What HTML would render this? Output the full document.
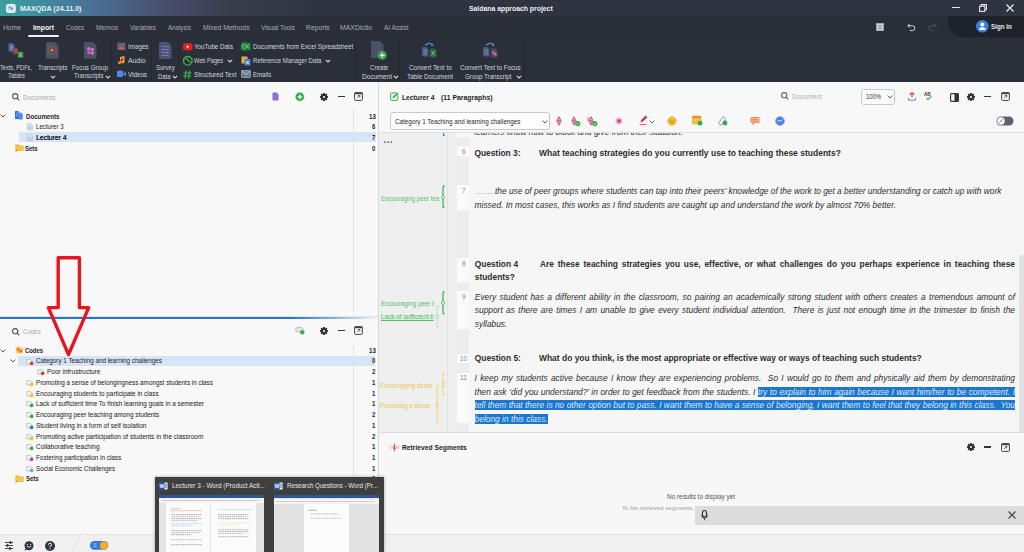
<!DOCTYPE html>
<html><head><meta charset="utf-8">
<style>
*{margin:0;padding:0;box-sizing:border-box}
html,body{width:1024px;height:552px;overflow:hidden;background:#f7f7f7;font-family:"Liberation Sans",sans-serif;position:relative}
.a{position:absolute}
.t{position:absolute;white-space:nowrap;transform-origin:0 50%}
svg{position:absolute;overflow:visible}
</style></head><body>
<div class="a" style="left:0px;top:0px;width:1024px;height:16px;background:linear-gradient(90deg,#3b9fa0 0px,#3f8c9f 40px,#4a6f94 95px,#494f70 160px,#383d4c 230px,#2f3440 320px);"></div>
<svg style="left:6.4px;top:3.9px;" width="10" height="9" viewBox="0 0 10 9"><rect x="0.7" y="0.7" width="8.4" height="7.6" rx="1.5" fill="#d6e0f0" stroke="#f4f7fb" stroke-width="1.3"/><circle cx="3.6" cy="3.6" r="1" fill="#5a80d0"/><circle cx="6" cy="4.8" r="1" fill="#5a80d0"/><path d="M3 6.3L6.5 2.5" stroke="#9aa8c0" stroke-width="0.6"/></svg>
<div class="t" style="left:20px;top:3.91px;font-size:7px;line-height:10px;color:#eef0f3;font-weight:bold;transform:scaleX(1.0176);">MAXQDA (24.11.0)</div>
<div class="t" style="left:468.7px;top:3.39px;font-size:8px;line-height:11px;color:#eef0f3;font-weight:bold;transform:scaleX(0.8557);">Saldana approach project</div>
<div class="a" style="left:951.5px;top:7px;width:8px;height:1.2px;background:#e6e8ec;"></div>
<svg style="left:979px;top:4px;" width="8" height="8" viewBox="0 0 8 8"><rect x="0.6" y="2.2" width="5.2" height="5.2" fill="none" stroke="#e6e8ec" stroke-width="1.1"/><path d="M2.2 2.2V0.6H7.4V5.8H5.8" fill="none" stroke="#e6e8ec" stroke-width="1.1"/></svg>
<svg style="left:1006px;top:4px;" width="8" height="8" viewBox="0 0 8 8"><path d="M0.5 0.5L7.5 7.5M7.5 0.5L0.5 7.5" stroke="#e6e8ec" stroke-width="1.3"/></svg>
<div class="a" style="left:0px;top:16px;width:1024px;height:21px;background:#292e39;"></div>
<div class="t" style="left:3px;top:22.85px;font-size:7.5px;line-height:10px;color:#a9adb5;transform:scaleX(0.8993);">Home</div>
<div class="t" style="left:33px;top:22.85px;font-size:7.5px;line-height:10px;color:#f4f5f7;font-weight:bold;transform:scaleX(0.8996);">Import</div>
<div class="t" style="left:65.6px;top:22.85px;font-size:7.5px;line-height:10px;color:#a9adb5;transform:scaleX(0.8346);">Codes</div>
<div class="t" style="left:96px;top:22.85px;font-size:7.5px;line-height:10px;color:#a9adb5;transform:scaleX(0.8945);">Memos</div>
<div class="t" style="left:130px;top:22.85px;font-size:7.5px;line-height:10px;color:#a9adb5;transform:scaleX(0.8464);">Variables</div>
<div class="t" style="left:168px;top:22.85px;font-size:7.5px;line-height:10px;color:#a9adb5;transform:scaleX(0.8233);">Analysis</div>
<div class="t" style="left:203.2px;top:22.85px;font-size:7.5px;line-height:10px;color:#a9adb5;transform:scaleX(0.9163);">Mixed Methods</div>
<div class="t" style="left:260.5px;top:22.85px;font-size:7.5px;line-height:10px;color:#a9adb5;transform:scaleX(0.8553);">Visual Tools</div>
<div class="t" style="left:305.6px;top:22.85px;font-size:7.5px;line-height:10px;color:#a9adb5;transform:scaleX(0.9023);">Reports</div>
<div class="t" style="left:340px;top:22.85px;font-size:7.5px;line-height:10px;color:#a9adb5;transform:scaleX(0.9196);">MAXDictio</div>
<div class="t" style="left:383.6px;top:22.85px;font-size:7.5px;line-height:10px;color:#a9adb5;transform:scaleX(0.8517);">AI Assist</div>
<div class="a" style="left:28px;top:35px;width:31px;height:2.2px;background:#f2f3f5;border-radius:1px"></div>
<div class="a" style="left:948px;top:16px;width:76px;height:21px;background:#1e222a;border-radius:0 0 0 15px"></div>
<svg style="left:975.5px;top:20.4px;" width="13" height="13" viewBox="0 0 13 13"><circle cx="6.3" cy="6.3" r="6.3" fill="#3a7fe0"/><circle cx="6.3" cy="4.6" r="2" fill="#fff"/><path d="M3 10C3.3 7.8 4.7 7.3 6.3 7.3S9.3 7.8 9.6 10Z" fill="#fff"/></svg>
<div class="t" style="left:990.5px;top:22.31px;font-size:7px;line-height:10px;color:#e8eaee;font-weight:bold;transform:scaleX(0.8910);">Sign in</div>
<svg style="left:875.5px;top:23px;" width="8" height="8" viewBox="0 0 8 8"><rect x="0.5" y="0.5" width="7" height="7" fill="#cfd2d8" stroke="#9ea3ab" stroke-width="1"/><path d="M2 2.5H6M2 4H6M2 5.5H6" stroke="#8a8f98" stroke-width="0.8"/></svg>
<svg style="left:906.5px;top:23px;" width="9" height="8" viewBox="0 0 9 8"><path d="M2.5 1L0.8 2.8L2.5 4.6" fill="none" stroke="#d6d9de" stroke-width="1"/><path d="M1 2.8H5.5A2.4 2.4 0 0 1 5.5 7.6H3" fill="none" stroke="#d6d9de" stroke-width="1"/></svg>
<svg style="left:928px;top:23px;" width="9" height="8" viewBox="0 0 9 8"><path d="M6.5 1L8.2 2.8L6.5 4.6" fill="none" stroke="#50555f" stroke-width="1"/><path d="M8 2.8H3.5A2.4 2.4 0 0 0 3.5 7.6H6" fill="none" stroke="#50555f" stroke-width="1"/></svg>
<div class="a" style="left:0px;top:37px;width:1024px;height:45px;background:#2a2f3a;"></div>
<div class="a" style="left:0px;top:36.8px;width:1024px;height:1px;background:#252932;"></div>
<svg style="left:0px;top:0px;" width="1" height="1" viewBox="0 0 1 1"></svg>
<svg style="left:8px;top:43px" width="17" height="16"><path d="M0.5 1.3Q0.5 0.3 1.5 0.3H4.7L6.5 2.0999999999999996V7.800000000000001Q6.5 8.8 5.5 8.8H1.5Q0.5 8.8 0.5 7.800000000000001Z" fill="#4d6a9a"/><path d="M2 3H5M2 4.5H5M2 6H5" stroke="#7fa0d8" stroke-width="0.8"/><path d="M5 5.5Q5 4.5 6 4.5H8.5L10 6.0V10.5Q10 11.5 9 11.5H6Q5 11.5 5 10.5Z" fill="#6a4a55"/><path d="M6 10L7.5 6L9 10" fill="none" stroke="#d0504a" stroke-width="0.9"/><path d="M9.5 9.5Q9.5 8.5 10.5 8.5H13.7L15.5 10.3V14.0Q15.5 15.0 14.5 15.0H10.5Q9.5 15.0 9.5 14.0Z" fill="#3f5a4a"/><path d="M10.5 10L14.5 13.5M14.5 10L10.5 13.5" stroke="#5fd06a" stroke-width="1.1"/><path d="M10.5 9.8H14.8M10.5 13.8H14.8" stroke="#5fd06a" stroke-width="0.8"/></svg>
<div class="t" style="left:0px;top:63.05px;font-size:7.5px;line-height:10px;color:#d3d6dc;transform:scaleX(0.7527);">Texts, PDFs,</div>
<div class="t" style="left:8px;top:71.25px;font-size:7.5px;line-height:10px;color:#d3d6dc;transform:scaleX(0.7839);">Tables</div>
<svg style="left:46px;top:42px" width="13" height="17"><path d="M0 1Q0 0 1 0H8.75L12.5 3.75V15.8Q12.5 16.8 11.5 16.8H1Q0 16.8 0 15.8Z" fill="#4a5365"/><circle cx="6.2" cy="8.3" r="4" fill="none" stroke="#a5584e" stroke-width="1.3" stroke-dasharray="1 0.8"/><circle cx="6.2" cy="8.3" r="1.8" fill="#d43a3a"/><circle cx="5.6" cy="8" r="0.9" fill="#f2c230"/></svg>
<div class="t" style="left:37.5px;top:63.05px;font-size:7.5px;line-height:10px;color:#d3d6dc;transform:scaleX(0.8014);">Transcripts</div>
<svg style="left:49.5px;top:74.5px;" width="6" height="4" viewBox="0 0 6 4"><path d="M0.8 0.8L3 3L5.2 0.8" fill="none" stroke="#d3d6dc" stroke-width="1.1"/></svg>
<svg style="left:84px;top:42px" width="13" height="17"><path d="M0 1Q0 0 1 0H8.75L12.5 3.75V15.8Q12.5 16.8 11.5 16.8H1Q0 16.8 0 15.8Z" fill="#4a5365"/><circle cx="4.6" cy="6.8" r="1.7" fill="#e06ad0"/><circle cx="8.2" cy="7.4" r="1.7" fill="#e06ad0"/><circle cx="5" cy="10.5" r="1.7" fill="#c85cc0"/><circle cx="8.4" cy="11" r="1.7" fill="#e06ad0"/></svg>
<div class="t" style="left:72px;top:63.05px;font-size:7.5px;line-height:10px;color:#d3d6dc;transform:scaleX(0.8303);">Focus Group</div>
<div class="t" style="left:74.4px;top:71.25px;font-size:7.5px;line-height:10px;color:#d3d6dc;transform:scaleX(0.8014);">Transcripts</div>
<svg style="left:105px;top:74.5px;" width="6" height="4" viewBox="0 0 6 4"><path d="M0.8 0.8L3 3L5.2 0.8" fill="none" stroke="#d3d6dc" stroke-width="1.1"/></svg>
<div class="a" style="left:111px;top:40px;width:1px;height:40px;background:#242830;"></div>
<svg style="left:117px;top:42px" width="9" height="9"><rect x="0.3" y="0.5" width="8" height="7.5" rx="1" fill="#5b5f75"/><path d="M1 7.5L3.5 4L5.5 6L6.8 5L8 7.5Z" fill="#e0504f"/><circle cx="6" cy="2.6" r="0.9" fill="#e0504f"/></svg>
<div class="t" style="left:127.8px;top:42.25px;font-size:7.5px;line-height:10px;color:#d3d6dc;transform:scaleX(0.8330);">Images</div>
<svg style="left:117px;top:56px" width="9" height="9"><path d="M3 8A1.6 1.6 0 1 1 3 5V1L7.5 0V5.5A1.6 1.6 0 1 1 6 4.2V2L4.2 2.4V6.6A1.6 1.6 0 0 1 3 8Z" fill="#f0a02a"/><path d="M1.2 7L6 2" stroke="#d03a2a" stroke-width="1"/></svg>
<div class="t" style="left:127.8px;top:56.15px;font-size:7.5px;line-height:10px;color:#d3d6dc;transform:scaleX(0.9121);">Audio</div>
<svg style="left:117px;top:70px" width="9" height="8"><rect x="0" y="0.8" width="6" height="6.2" rx="0.8" fill="#4f8ae8"/><path d="M6.2 3.3L8.8 1.5V6.3L6.2 4.5Z" fill="#4f8ae8"/></svg>
<div class="t" style="left:127.8px;top:69.85px;font-size:7.5px;line-height:10px;color:#d3d6dc;transform:scaleX(0.8334);">Videos</div>
<div class="a" style="left:151px;top:40px;width:1px;height:40px;background:#242830;"></div>
<svg style="left:159px;top:42px" width="13" height="17"><path d="M0 1Q0 0 1 0H8.75L12.5 3.75V16Q12.5 17 11.5 17H1Q0 17 0 16Z" fill="#4a5370"/><path d="M2.5 4.5H10M2.5 7.5H10M2.5 10.5H10M2.5 13.5H10" stroke="#6e7fc0" stroke-width="1.2"/><circle cx="4" cy="7.5" r="0.9" fill="#d55bd0"/><circle cx="8" cy="10.5" r="0.9" fill="#d55bd0"/></svg>
<div class="t" style="left:155.8px;top:63.25px;font-size:7.5px;line-height:10px;color:#d3d6dc;transform:scaleX(0.8011);">Survey</div>
<div class="t" style="left:157.9px;top:71.55px;font-size:7.5px;line-height:10px;color:#d3d6dc;transform:scaleX(0.7890);">Data</div>
<svg style="left:171.5px;top:74.5px;" width="6" height="4" viewBox="0 0 6 4"><path d="M0.8 0.8L3 3L5.2 0.8" fill="none" stroke="#d3d6dc" stroke-width="1.1"/></svg>
<div class="a" style="left:178px;top:40px;width:1px;height:40px;background:#242830;"></div>
<svg style="left:183px;top:43px" width="10" height="8"><rect x="0" y="0.3" width="9.5" height="7" rx="2" fill="#e52020"/><path d="M3.8 2.2L6.3 3.8L3.8 5.4Z" fill="#fff"/></svg>
<div class="t" style="left:194px;top:42.25px;font-size:7.5px;line-height:10px;color:#d3d6dc;transform:scaleX(0.8227);">YouTube Data</div>
<svg style="left:183px;top:56px" width="10" height="10"><circle cx="4.8" cy="4.8" r="4.3" fill="none" stroke="#3fb64a" stroke-width="1.4"/><path d="M2.5 3.5Q4 2 5 4T7.5 6" fill="none" stroke="#3fb64a" stroke-width="1.3"/></svg>
<div class="t" style="left:194px;top:56.15px;font-size:7.5px;line-height:10px;color:#d3d6dc;transform:scaleX(0.7505);">Web Pages</div>
<svg style="left:226.5px;top:59px;" width="6" height="4" viewBox="0 0 6 4"><path d="M0.8 0.8L3 3L5.2 0.8" fill="none" stroke="#d3d6dc" stroke-width="1.1"/></svg>
<svg style="left:183px;top:70px" width="9" height="9"><path d="M3 0.5L2 8.5M6.5 0.5L5.5 8.5M0.5 3H8.5M0.3 6H8.2" stroke="#3fb64a" stroke-width="1.2"/></svg>
<div class="t" style="left:194px;top:69.85px;font-size:7.5px;line-height:10px;color:#d3d6dc;transform:scaleX(0.8447);">Structured Text</div>
<svg style="left:241px;top:42px" width="10" height="9"><path d="M1 0.5H9.5V8.5H1Z" fill="#1f7a3c"/><path d="M0 2L4 0.5V8.5L0 7Z" fill="#2e9e4f"/><path d="M4.5 2.5L8 6.5M8 2.5L4.5 6.5" stroke="#7ee08e" stroke-width="1"/></svg>
<div class="t" style="left:252.7px;top:42.25px;font-size:7.5px;line-height:10px;color:#d3d6dc;transform:scaleX(0.8354);">Documents from Excel Spreadsheet</div>
<svg style="left:241px;top:56px" width="10" height="10"><rect x="0.5" y="0.5" width="6" height="7" fill="#e3b23a"/><rect x="3.5" y="3" width="6" height="6.5" fill="#4a7fd0"/><rect x="5" y="5" width="3" height="3" fill="#9fc4f0"/></svg>
<div class="t" style="left:252.7px;top:56.15px;font-size:7.5px;line-height:10px;color:#d3d6dc;transform:scaleX(0.8134);">Reference Manager Data</div>
<svg style="left:325px;top:59px;" width="6" height="4" viewBox="0 0 6 4"><path d="M0.8 0.8L3 3L5.2 0.8" fill="none" stroke="#d3d6dc" stroke-width="1.1"/></svg>
<svg style="left:241px;top:70px" width="10" height="8"><rect x="0.5" y="0.5" width="9" height="7" rx="0.8" fill="#6a7a90" stroke="#9aa8ba" stroke-width="0.8"/><path d="M0.8 1L5 4.5L9.2 1" fill="none" stroke="#c9d3df" stroke-width="0.8"/></svg>
<div class="t" style="left:252.7px;top:69.85px;font-size:7.5px;line-height:10px;color:#d3d6dc;transform:scaleX(0.8083);">Emails</div>
<div class="a" style="left:355px;top:40px;width:1px;height:40px;background:#242830;"></div>
<svg style="left:371px;top:41px" width="17" height="20"><path d="M0 1Q0 0 1 0H8.75L12.5 3.75V16Q12.5 17 11.5 17H1Q0 17 0 16Z" fill="#4a5365"/><circle cx="11.3" cy="14.3" r="4" fill="#2fae4a"/><circle cx="11.3" cy="14.3" r="4.4" fill="none" stroke="#8fe09a" stroke-width="0.6" stroke-dasharray="0.8 0.8"/><path d="M9 14.3H13.6M11.3 12V16.6" stroke="#fff" stroke-width="1.2"/></svg>
<div class="t" style="left:369.5px;top:63.05px;font-size:7.5px;line-height:10px;color:#d3d6dc;transform:scaleX(0.8083);">Create</div>
<div class="t" style="left:361.5px;top:71.55px;font-size:7.5px;line-height:10px;color:#d3d6dc;transform:scaleX(0.8775);">Document</div>
<svg style="left:393px;top:74.5px;" width="6" height="4" viewBox="0 0 6 4"><path d="M0.8 0.8L3 3L5.2 0.8" fill="none" stroke="#d3d6dc" stroke-width="1.1"/></svg>
<div class="a" style="left:399px;top:40px;width:1px;height:40px;background:#242830;"></div>
<svg style="left:421px;top:42px" width="18" height="16"><path d="M4 3.5Q8 -0.5 12 3" fill="none" stroke="#4f8ae8" stroke-width="1.2"/><path d="M11 1.2L12.6 3.6L10 4.3" fill="#4f8ae8"/><path d="M1 6Q1 5 2 5H5.55L7.5 6.95V13.5Q7.5 14.5 6.5 14.5H2Q1 14.5 1 13.5Z" fill="#4a5a7a"/><path d="M2.5 8H6M2.5 10H6M2.5 12H6" stroke="#7fa0d8" stroke-width="0.7"/><path d="M9 7.5Q9 6.5 10 6.5H13.55L15.5 8.45V14.5Q15.5 15.5 14.5 15.5H10Q9 15.5 9 14.5Z" fill="#3f5a4a"/><path d="M10.5 9L14 13.5M14 9L10.5 13.5" stroke="#5fd06a" stroke-width="1"/></svg>
<div class="t" style="left:409px;top:63.05px;font-size:7.5px;line-height:10px;color:#d3d6dc;transform:scaleX(0.8487);">Convert Text to</div>
<div class="t" style="left:407px;top:71.55px;font-size:7.5px;line-height:10px;color:#d3d6dc;transform:scaleX(0.8487);">Table Document</div>
<svg style="left:482px;top:42px" width="18" height="16"><path d="M4 3.5Q8 -0.5 12 3" fill="none" stroke="#4f8ae8" stroke-width="1.2"/><path d="M11 1.2L12.6 3.6L10 4.3" fill="#4f8ae8"/><path d="M1 6Q1 5 2 5H5.55L7.5 6.95V13.5Q7.5 14.5 6.5 14.5H2Q1 14.5 1 13.5Z" fill="#4a5a7a"/><path d="M2.5 8H6M2.5 10H6M2.5 12H6" stroke="#7fa0d8" stroke-width="0.7"/><path d="M9 7.5Q9 6.5 10 6.5H13.55L15.5 8.45V14.5Q15.5 15.5 14.5 15.5H10Q9 15.5 9 14.5Z" fill="#4a4a60"/><circle cx="11.5" cy="10.5" r="1.2" fill="#e06ad0"/><circle cx="13.3" cy="12.3" r="1.2" fill="#e06ad0"/></svg>
<div class="t" style="left:460px;top:63.05px;font-size:7.5px;line-height:10px;color:#d3d6dc;transform:scaleX(0.8336);">Convert Text to Focus</div>
<div class="t" style="left:465px;top:71.55px;font-size:7.5px;line-height:10px;color:#d3d6dc;transform:scaleX(0.8324);">Group Transcript</div>
<svg style="left:516px;top:74.5px;" width="6" height="4" viewBox="0 0 6 4"><path d="M0.8 0.8L3 3L5.2 0.8" fill="none" stroke="#d3d6dc" stroke-width="1.1"/></svg>
<div class="a" style="left:523.5px;top:40px;width:1px;height:40px;background:#242830;"></div>
<div class="a" style="left:0px;top:82px;width:378px;height:452px;background:#f8f8f8;"></div>
<div class="a" style="left:378px;top:82px;width:1px;height:452px;background:#d9d9d9;"></div>
<svg style="left:12px;top:93px;" width="8" height="8" viewBox="0 0 8 8"><circle cx="3.2" cy="3.2" r="2.6" fill="none" stroke="#555" stroke-width="1.1"/><path d="M5.1 5.1L7.3 7.3" stroke="#555" stroke-width="1.2"/></svg>
<div class="t" style="left:22.6px;top:92.51px;font-size:7px;line-height:10px;color:#a9a9a9;transform:scaleX(0.9151);">Documents</div>
<svg style="left:272px;top:92px" width="7" height="9"><path d="M0.5 1.5Q0.5 0.5 1.5 0.5H4.5L6.5 2.5V7.5Q6.5 8.5 5.5 8.5H1.5Q0.5 8.5 0.5 7.5Z" fill="#7d6fd6"/><circle cx="3.5" cy="4.3" r="1" fill="#e05ad0"/><circle cx="3.5" cy="6.5" r="1" fill="#e05ad0"/></svg>
<svg style="left:294.5px;top:92px" width="10" height="10"><circle cx="4.8" cy="4.8" r="4.3" fill="#2fa84a"/><circle cx="4.8" cy="4.8" r="4.5" fill="none" stroke="#9fdc8f" stroke-width="0.5"/><path d="M2.4 4.8H7.2M4.8 2.4V7.2" stroke="#fff" stroke-width="1.3"/></svg>
<svg style="left:320.4px;top:92.7px" width="8" height="8" viewBox="-4 -4 8 8"><rect x="-0.9" y="-4" width="1.8" height="2" fill="#2a2a2a" transform="rotate(0)"/><rect x="-0.9" y="-4" width="1.8" height="2" fill="#2a2a2a" transform="rotate(45)"/><rect x="-0.9" y="-4" width="1.8" height="2" fill="#2a2a2a" transform="rotate(90)"/><rect x="-0.9" y="-4" width="1.8" height="2" fill="#2a2a2a" transform="rotate(135)"/><rect x="-0.9" y="-4" width="1.8" height="2" fill="#2a2a2a" transform="rotate(180)"/><rect x="-0.9" y="-4" width="1.8" height="2" fill="#2a2a2a" transform="rotate(225)"/><rect x="-0.9" y="-4" width="1.8" height="2" fill="#2a2a2a" transform="rotate(270)"/><rect x="-0.9" y="-4" width="1.8" height="2" fill="#2a2a2a" transform="rotate(315)"/><circle r="2.7" fill="#2a2a2a"/><circle r="1.1" fill="#f8f8f8"/></svg>
<div class="a" style="left:338.4px;top:96.2px;width:7px;height:1.3px;background:#333;"></div>
<svg style="left:353.8px;top:92.4px;" width="9" height="9" viewBox="0 0 9 9"><rect x="0.6" y="0.6" width="7.8" height="7.8" rx="1" fill="none" stroke="#444" stroke-width="1"/><rect x="0.6" y="0.6" width="7.8" height="1.6" fill="#444"/><path d="M3.2 6L5.8 3.4M3.8 3.4H5.8V5.4" fill="none" stroke="#444" stroke-width="0.8"/></svg>
<svg style="left:0px;top:114px;" width="6" height="4" viewBox="0 0 6 4"><path d="M0.6 0.6L3 3L5.4 0.6" fill="none" stroke="#555" stroke-width="1"/></svg>
<svg style="left:15px;top:111px" width="8" height="9"><rect x="0" y="0" width="3.6" height="8" rx="0.6" fill="#2f6fd8"/><path d="M3 1.5H6L7.8 3.3V8.6H3Z" fill="#4a8ff0"/><path d="M1 2H2.5M1 3.5H2.5M1 5H2.5" stroke="#bcd6ff" stroke-width="0.6"/></svg>
<div class="t" style="left:25.8px;top:111.61px;font-size:7px;line-height:10px;color:#1e1e1e;font-weight:bold;transform:scaleX(0.8787);">Documents</div>
<div class="t" style="left:368.6px;top:111.61px;font-size:7px;line-height:10px;color:#1e1e1e;font-weight:bold;transform:scaleX(0.8721);">13</div>
<div class="a" style="left:352.5px;top:109px;width:1px;height:203px;background:#e2e2e2;"></div>
<svg style="left:26.5px;top:123px;" width="6" height="7" viewBox="0 0 6 7"><path d="M0.5 0.5H3.8L5.5 2.2V6.8H0.5Z" fill="#e6eef8" stroke="#aebfd8" stroke-width="0.7"/><path d="M1.5 3H4.5M1.5 4.3H4.5M1.5 5.6H4.5" stroke="#7b9cd0" stroke-width="0.55"/></svg>
<div class="t" style="left:36.2px;top:122.31px;font-size:7px;line-height:10px;color:#202020;transform:scaleX(0.8785);">Lecturer 3</div>
<div class="t" style="left:372.1px;top:122.31px;font-size:7px;line-height:10px;color:#1e1e1e;font-weight:bold;transform:scaleX(0.8448);">6</div>
<div class="a" style="left:18.6px;top:131.7px;width:357px;height:10px;background:#d5e4f6;"></div>
<svg style="left:26.5px;top:133.5px;" width="6" height="7" viewBox="0 0 6 7"><path d="M0.5 0.5H3.8L5.5 2.2V6.8H0.5Z" fill="#e6eef8" stroke="#aebfd8" stroke-width="0.7"/><path d="M1.5 3H4.5M1.5 4.3H4.5M1.5 5.6H4.5" stroke="#7b9cd0" stroke-width="0.55"/></svg>
<div class="t" style="left:36.2px;top:132.71px;font-size:7px;line-height:10px;color:#1a1a1a;transform:scaleX(0.9673);text-shadow:0.25px 0 0 #1a1a1a;">Lecturer 4</div>
<div class="t" style="left:372.1px;top:132.71px;font-size:7px;line-height:10px;color:#1e1e1e;font-weight:bold;transform:scaleX(0.8448);">7</div>
<svg style="left:14.5px;top:143px" width="9" height="9"><path d="M0.5 1.5H3.5L4.5 2.5H8.5V8H0.5Z" fill="#f0b020"/><path d="M0.5 3H8.5V8H0.5Z" fill="#f6c84a"/><path d="M0.8 8.5L2.2 6.8" stroke="#d02a2a" stroke-width="0.8"/></svg>
<div class="t" style="left:25.4px;top:143.71px;font-size:7px;line-height:10px;color:#1e1e1e;font-weight:bold;transform:scaleX(0.8515);">Sets</div>
<div class="t" style="left:372.1px;top:143.71px;font-size:7px;line-height:10px;color:#1e1e1e;font-weight:bold;transform:scaleX(0.8448);">0</div>
<div class="a" style="left:0px;top:315.5px;width:378px;height:1px;background:#e4e4e4;"></div>
<div class="a" style="left:0px;top:316.5px;width:378px;height:2.4px;background:linear-gradient(90deg,#1f78c8 0,#1f78c8 290px,rgba(31,120,200,0.25) 360px,rgba(31,120,200,0) 378px);"></div>
<svg style="left:12px;top:327.5px;" width="8" height="8" viewBox="0 0 8 8"><circle cx="3.2" cy="3.2" r="2.6" fill="none" stroke="#555" stroke-width="1.1"/><path d="M5.1 5.1L7.3 7.3" stroke="#555" stroke-width="1.2"/></svg>
<div class="t" style="left:22.6px;top:326.71px;font-size:7px;line-height:10px;color:#a9a9a9;transform:scaleX(0.8747);">Codes</div>
<svg style="left:295px;top:326px" width="10" height="9"><rect x="0.5" y="1.5" width="7.5" height="4.5" rx="2.2" fill="#e5e5e5" stroke="#b5b5b5" stroke-width="0.8"/><circle cx="7.3" cy="6.2" r="2.2" fill="#3aaa4a"/></svg>
<svg style="left:320.3px;top:326.7px" width="8" height="8" viewBox="-4 -4 8 8"><rect x="-0.9" y="-4" width="1.8" height="2" fill="#2a2a2a" transform="rotate(0)"/><rect x="-0.9" y="-4" width="1.8" height="2" fill="#2a2a2a" transform="rotate(45)"/><rect x="-0.9" y="-4" width="1.8" height="2" fill="#2a2a2a" transform="rotate(90)"/><rect x="-0.9" y="-4" width="1.8" height="2" fill="#2a2a2a" transform="rotate(135)"/><rect x="-0.9" y="-4" width="1.8" height="2" fill="#2a2a2a" transform="rotate(180)"/><rect x="-0.9" y="-4" width="1.8" height="2" fill="#2a2a2a" transform="rotate(225)"/><rect x="-0.9" y="-4" width="1.8" height="2" fill="#2a2a2a" transform="rotate(270)"/><rect x="-0.9" y="-4" width="1.8" height="2" fill="#2a2a2a" transform="rotate(315)"/><circle r="2.7" fill="#2a2a2a"/><circle r="1.1" fill="#f8f8f8"/></svg>
<div class="a" style="left:337.5px;top:330.2px;width:7px;height:1.3px;background:#333;"></div>
<svg style="left:353.8px;top:326.3px;" width="9" height="9" viewBox="0 0 9 9"><rect x="0.6" y="0.6" width="7.8" height="7.8" rx="1" fill="none" stroke="#444" stroke-width="1"/><rect x="0.6" y="0.6" width="7.8" height="1.6" fill="#444"/><path d="M3.2 6L5.8 3.4M3.8 3.4H5.8V5.4" fill="none" stroke="#444" stroke-width="0.8"/></svg>
<svg style="left:0px;top:349px;" width="6" height="4" viewBox="0 0 6 4"><path d="M0.6 0.6L3 3L5.4 0.6" fill="none" stroke="#555" stroke-width="1"/></svg>
<svg style="left:14.5px;top:346px" width="9" height="8"><path d="M0.5 1.5L4 0.5L8.5 2.5L7.5 7.5L1.5 7.5Z" fill="#f3c54a"/><circle cx="3.2" cy="3.5" r="1.2" fill="#e8603a"/><circle cx="5.8" cy="5.2" r="1.2" fill="#e8603a"/></svg>
<div class="t" style="left:25.2px;top:345.81px;font-size:7px;line-height:10px;color:#1e1e1e;font-weight:bold;transform:scaleX(0.8362);">Codes</div>
<div class="t" style="left:368.6px;top:345.81px;font-size:7px;line-height:10px;color:#1e1e1e;font-weight:bold;transform:scaleX(0.8721);">13</div>
<div class="a" style="left:352.5px;top:345px;width:1px;height:189px;background:#e2e2e2;"></div>
<div class="a" style="left:18.4px;top:355.6px;width:357px;height:10.2px;background:#d5e4f6;"></div>
<svg style="left:10.4px;top:359px;" width="6" height="4" viewBox="0 0 6 4"><path d="M0.6 0.6L3 3L5.4 0.6" fill="none" stroke="#555" stroke-width="1"/></svg>
<svg style="left:26.2px;top:357.6px;" width="8" height="8" viewBox="0 0 8 8"><path d="M0.8 1.5H4.6L6.8 3.8L4.6 6H0.8Z" fill="#f2f2f2" stroke="#b9b9b9" stroke-width="0.7"/><circle cx="5.6" cy="5.4" r="1.8" fill="#e03a3a"/></svg>
<div class="t" style="left:36px;top:356.01px;font-size:7px;line-height:10px;color:#202020;transform:scaleX(0.9001);">Category 1 Teaching and learning challenges</div>
<div class="t" style="left:372.1px;top:356.01px;font-size:7px;line-height:10px;color:#1e1e1e;font-weight:bold;transform:scaleX(0.8448);">0</div>
<svg style="left:36.8px;top:368.2px;" width="8" height="8" viewBox="0 0 8 8"><path d="M0.8 1.5H4.6L6.8 3.8L4.6 6H0.8Z" fill="#f2f2f2" stroke="#b9b9b9" stroke-width="0.7"/><circle cx="5.6" cy="5.4" r="1.8" fill="#e03a3a"/></svg>
<div class="t" style="left:46.6px;top:367.11px;font-size:7px;line-height:10px;color:#202020;transform:scaleX(0.9272);">Poor infrustructure</div>
<div class="t" style="left:372.1px;top:367.11px;font-size:7px;line-height:10px;color:#1e1e1e;font-weight:bold;transform:scaleX(0.8448);">2</div>
<svg style="left:25.6px;top:378.7px;" width="8" height="8" viewBox="0 0 8 8"><path d="M0.8 1.5H4.6L6.8 3.8L4.6 6H0.8Z" fill="#f2f2f2" stroke="#b9b9b9" stroke-width="0.7"/><circle cx="5.6" cy="5.4" r="1.8" fill="#f2c21a"/></svg>
<div class="t" style="left:36.1px;top:377.81px;font-size:7px;line-height:10px;color:#202020;transform:scaleX(0.9038);">Promoting a sense of belongingness amongst students in class</div>
<div class="t" style="left:372.1px;top:377.81px;font-size:7px;line-height:10px;color:#1e1e1e;font-weight:bold;transform:scaleX(0.8448);">1</div>
<svg style="left:25.6px;top:389.5px;" width="8" height="8" viewBox="0 0 8 8"><path d="M0.8 1.5H4.6L6.8 3.8L4.6 6H0.8Z" fill="#f2f2f2" stroke="#b9b9b9" stroke-width="0.7"/><circle cx="5.6" cy="5.4" r="1.8" fill="#f2c21a"/></svg>
<div class="t" style="left:36.1px;top:388.61px;font-size:7px;line-height:10px;color:#202020;transform:scaleX(0.9079);">Encouraging students to participate in class</div>
<div class="t" style="left:372.1px;top:388.61px;font-size:7px;line-height:10px;color:#1e1e1e;font-weight:bold;transform:scaleX(0.8448);">1</div>
<svg style="left:25.6px;top:400.29999999999995px;" width="8" height="8" viewBox="0 0 8 8"><path d="M0.8 1.5H4.6L6.8 3.8L4.6 6H0.8Z" fill="#f2f2f2" stroke="#b9b9b9" stroke-width="0.7"/><circle cx="5.6" cy="5.4" r="1.8" fill="#2ea84a"/></svg>
<div class="t" style="left:36.1px;top:399.41px;font-size:7px;line-height:10px;color:#202020;transform:scaleX(0.9111);">Lack of sufficient time To finish learning goals in a semester</div>
<div class="t" style="left:372.1px;top:399.41px;font-size:7px;line-height:10px;color:#1e1e1e;font-weight:bold;transform:scaleX(0.8448);">1</div>
<svg style="left:25.6px;top:411.09999999999997px;" width="8" height="8" viewBox="0 0 8 8"><path d="M0.8 1.5H4.6L6.8 3.8L4.6 6H0.8Z" fill="#f2f2f2" stroke="#b9b9b9" stroke-width="0.7"/><circle cx="5.6" cy="5.4" r="1.8" fill="#2ea84a"/></svg>
<div class="t" style="left:36.1px;top:410.21px;font-size:7px;line-height:10px;color:#202020;transform:scaleX(0.9104);">Encouraging peer teaching among students</div>
<div class="t" style="left:372.1px;top:410.21px;font-size:7px;line-height:10px;color:#1e1e1e;font-weight:bold;transform:scaleX(0.8448);">2</div>
<svg style="left:25.6px;top:421.79999999999995px;" width="8" height="8" viewBox="0 0 8 8"><path d="M0.8 1.5H4.6L6.8 3.8L4.6 6H0.8Z" fill="#f2f2f2" stroke="#b9b9b9" stroke-width="0.7"/><circle cx="5.6" cy="5.4" r="1.8" fill="#2f6fd8"/></svg>
<div class="t" style="left:36.1px;top:420.91px;font-size:7px;line-height:10px;color:#202020;transform:scaleX(0.9242);">Student living in a form of self isolation</div>
<div class="t" style="left:372.1px;top:420.91px;font-size:7px;line-height:10px;color:#1e1e1e;font-weight:bold;transform:scaleX(0.8448);">1</div>
<svg style="left:25.6px;top:432.5px;" width="8" height="8" viewBox="0 0 8 8"><path d="M0.8 1.5H4.6L6.8 3.8L4.6 6H0.8Z" fill="#f2f2f2" stroke="#b9b9b9" stroke-width="0.7"/><circle cx="5.6" cy="5.4" r="1.8" fill="#f2c21a"/></svg>
<div class="t" style="left:36.1px;top:431.61px;font-size:7px;line-height:10px;color:#202020;transform:scaleX(0.9246);">Promoting active participation of students in the classroom</div>
<div class="t" style="left:372.1px;top:431.61px;font-size:7px;line-height:10px;color:#1e1e1e;font-weight:bold;transform:scaleX(0.8448);">2</div>
<svg style="left:25.6px;top:443.29999999999995px;" width="8" height="8" viewBox="0 0 8 8"><path d="M0.8 1.5H4.6L6.8 3.8L4.6 6H0.8Z" fill="#f2f2f2" stroke="#b9b9b9" stroke-width="0.7"/><circle cx="5.6" cy="5.4" r="1.8" fill="#2ea84a"/></svg>
<div class="t" style="left:36.1px;top:442.41px;font-size:7px;line-height:10px;color:#202020;transform:scaleX(0.9168);">Collaborative teaching</div>
<div class="t" style="left:372.1px;top:442.41px;font-size:7px;line-height:10px;color:#1e1e1e;font-weight:bold;transform:scaleX(0.8448);">1</div>
<svg style="left:25.6px;top:453.9px;" width="8" height="8" viewBox="0 0 8 8"><path d="M0.8 1.5H4.6L6.8 3.8L4.6 6H0.8Z" fill="#f2f2f2" stroke="#b9b9b9" stroke-width="0.7"/><circle cx="5.6" cy="5.4" r="1.8" fill="#9a4ad0"/></svg>
<div class="t" style="left:36.1px;top:453.01px;font-size:7px;line-height:10px;color:#202020;transform:scaleX(0.9049);">Fostering participation in class</div>
<div class="t" style="left:372.1px;top:453.01px;font-size:7px;line-height:10px;color:#1e1e1e;font-weight:bold;transform:scaleX(0.8448);">1</div>
<svg style="left:25.6px;top:464.5px;" width="8" height="8" viewBox="0 0 8 8"><path d="M0.8 1.5H4.6L6.8 3.8L4.6 6H0.8Z" fill="#f2f2f2" stroke="#b9b9b9" stroke-width="0.7"/><circle cx="5.6" cy="5.4" r="1.8" fill="#5ab0f0"/></svg>
<div class="t" style="left:36.1px;top:463.61px;font-size:7px;line-height:10px;color:#202020;transform:scaleX(0.8916);">Social Economic Challenges</div>
<div class="t" style="left:372.1px;top:463.61px;font-size:7px;line-height:10px;color:#1e1e1e;font-weight:bold;transform:scaleX(0.8448);">1</div>
<svg style="left:14.5px;top:474px" width="9" height="9"><path d="M0.5 1.5H3.5L4.5 2.5H8.5V8H0.5Z" fill="#f0b020"/><path d="M0.5 3H8.5V8H0.5Z" fill="#f6c84a"/><path d="M0.8 8.5L2.2 6.8" stroke="#d02a2a" stroke-width="0.8"/></svg>
<div class="t" style="left:25.6px;top:474.11px;font-size:7px;line-height:10px;color:#1e1e1e;font-weight:bold;transform:scaleX(0.8583);">Sets</div>
<div class="t" style="left:372.1px;top:474.11px;font-size:7px;line-height:10px;color:#1e1e1e;font-weight:bold;transform:scaleX(0.8448);">0</div>
<svg style="left:0px;top:0px;pointer-events:none;z-index:5" width="1024" height="552" viewBox="0 0 1024 552"><path d="M58.2 257.7H79.4V307.6H88.7L68.5 354.6L48.4 307.6H58.2Z" fill="none" stroke="#e8141e" stroke-width="3.4" stroke-linejoin="round"/></svg>
<div class="a" style="left:0px;top:534px;width:1024px;height:18px;background:#f0f0f0;"></div>
<div class="a" style="left:0px;top:533.5px;width:1024px;height:1px;background:#e3e3e3;"></div>
<div class="a" style="left:379px;top:82px;width:645px;height:51px;background:#f8f8f8;"></div>
<div class="a" style="left:379px;top:132px;width:645px;height:1px;background:#dedede;"></div>
<svg style="left:389.5px;top:91.5px" width="9" height="9"><rect x="0.6" y="0.9" width="7.2" height="7.5" rx="1.2" fill="#eaf6ea" stroke="#3fae4f" stroke-width="1"/><path d="M2.5 6.3L3 4.6L6.6 1L7.8 2.2L4.2 5.8Z" fill="#3fae4f"/></svg>
<div class="t" style="left:402px;top:92.55px;font-size:7.5px;line-height:10px;color:#1e1e1e;font-weight:bold;transform:scaleX(0.8985);">Lecturer 4</div>
<div class="t" style="left:441px;top:92.55px;font-size:7.5px;line-height:10px;color:#1e1e1e;font-weight:bold;transform:scaleX(0.9150);">(11 Paragraphs)</div>
<svg style="left:780.5px;top:92px;" width="8" height="8" viewBox="0 0 8 8"><circle cx="3.2" cy="3.2" r="2.6" fill="none" stroke="#666" stroke-width="1.1"/><path d="M5.1 5.1L7.3 7.3" stroke="#666" stroke-width="1.2"/></svg>
<div class="t" style="left:791.8px;top:92.01px;font-size:7px;line-height:10px;color:#b0b0b0;transform:scaleX(0.9403);">Document</div>
<div class="a" style="left:861.4px;top:88.9px;width:33.2px;height:15.8px;background:#fbfbfb;border:1px solid #c9c9c9;border-radius:3px"></div>
<div class="t" style="left:866px;top:92.31px;font-size:7px;line-height:10px;color:#333;transform:scaleX(0.8377);">100%</div>
<svg style="left:886.5px;top:95px;" width="6" height="4" viewBox="0 0 6 4"><path d="M0.6 0.6L3 3L5.4 0.6" fill="none" stroke="#555" stroke-width="1"/></svg>
<svg style="left:907.5px;top:91.5px;" width="8" height="9" viewBox="0 0 8 9"><path d="M4 0.8V5.5M1.8 2.8L4 0.6L6.2 2.8" fill="none" stroke="#e03a3a" stroke-width="1.1"/><path d="M0.5 6V8.2H7.5V6" fill="none" stroke="#4a7fd0" stroke-width="0.9"/></svg>
<svg style="left:923.5px;top:90.5px;" width="9" height="10" viewBox="0 0 9 10"><text x="0" y="4.6" font-size="4.6" font-weight="bold" font-family="Liberation Sans" fill="#333">AB</text><path d="M2.5 7L4 8.5L7.5 5.2" fill="none" stroke="#2fae4a" stroke-width="1.1"/></svg>
<svg style="left:949.5px;top:92.5px;" width="9" height="9" viewBox="0 0 9 9"><rect x="0.6" y="0.6" width="7.8" height="7.8" rx="1" fill="none" stroke="#333" stroke-width="1.1"/><rect x="4.5" y="0.6" width="3.9" height="7.8" fill="#333"/></svg>
<svg style="left:966.6px;top:92.5px" width="8" height="8" viewBox="-4 -4 8 8"><rect x="-0.9" y="-4" width="1.8" height="2" fill="#2a2a2a" transform="rotate(0)"/><rect x="-0.9" y="-4" width="1.8" height="2" fill="#2a2a2a" transform="rotate(45)"/><rect x="-0.9" y="-4" width="1.8" height="2" fill="#2a2a2a" transform="rotate(90)"/><rect x="-0.9" y="-4" width="1.8" height="2" fill="#2a2a2a" transform="rotate(135)"/><rect x="-0.9" y="-4" width="1.8" height="2" fill="#2a2a2a" transform="rotate(180)"/><rect x="-0.9" y="-4" width="1.8" height="2" fill="#2a2a2a" transform="rotate(225)"/><rect x="-0.9" y="-4" width="1.8" height="2" fill="#2a2a2a" transform="rotate(270)"/><rect x="-0.9" y="-4" width="1.8" height="2" fill="#2a2a2a" transform="rotate(315)"/><circle r="2.7" fill="#2a2a2a"/><circle r="1.1" fill="#f8f8f8"/></svg>
<div class="a" style="left:984px;top:96px;width:7px;height:1.3px;background:#333;"></div>
<svg style="left:1000.5px;top:92.3px;" width="9" height="9" viewBox="0 0 9 9"><rect x="0.6" y="0.6" width="7.8" height="7.8" rx="1" fill="none" stroke="#444" stroke-width="1"/><rect x="0.6" y="0.6" width="7.8" height="1.6" fill="#444"/><path d="M3.2 6L5.8 3.4M3.8 3.4H5.8V5.4" fill="none" stroke="#444" stroke-width="0.8"/></svg>
<div class="a" style="left:390px;top:112.3px;width:159.6px;height:17.4px;background:#fdfdfd;border:1px solid #c8c8c8;border-radius:3px"></div>
<div class="t" style="left:394.5px;top:117.21px;font-size:7px;line-height:10px;color:#2a2a2a;transform:scaleX(0.8965);">Category 1 Teaching and learning challenges</div>
<svg style="left:542px;top:120px;" width="6" height="4" viewBox="0 0 6 4"><path d="M0.6 0.6L3 3L5.4 0.6" fill="none" stroke="#555" stroke-width="1"/></svg>
<svg style="left:553.5px;top:115.9px;" width="11" height="11" viewBox="0 0 11 11"><path d="M5 0.3V9.7" stroke="#d04a70" stroke-width="0.7"/><path d="M5 1.2L7.2 5L5 8.8L2.8 5Z" fill="#f6c6d4" stroke="#d8406a" stroke-width="1"/><path d="M5 3.4L6 5L5 6.6L4 5Z" fill="#8a4ad0"/></svg>
<svg style="left:569px;top:115.9px;" width="11" height="11" viewBox="0 0 11 11"><path d="M5 0.3V9.7" stroke="#d04a70" stroke-width="0.7"/><path d="M5 1.2L7.2 5L5 8.8L2.8 5Z" fill="#f6c6d4" stroke="#d8406a" stroke-width="1"/><path d="M5 3.4L6 5L5 6.6L4 5Z" fill="#8a4ad0"/><circle cx="8.8" cy="7.6" r="2.6" fill="#3aaa4a"/><path d="M7.6 7.6L8.5 8.5L10 6.9" fill="none" stroke="#fff" stroke-width="0.7"/></svg>
<svg style="left:586px;top:115.9px;" width="11" height="11" viewBox="0 0 11 11"><path d="M5 0.3V9.7" stroke="#d04a70" stroke-width="0.7"/><path d="M5 1.2L7.2 5L5 8.8L2.8 5Z" fill="#f6c6d4" stroke="#d8406a" stroke-width="1"/><path d="M5 3.4L6 5L5 6.6L4 5Z" fill="#8a4ad0"/><path d="M2 0.8V5" stroke="#d04a70" stroke-width="0.8"/><circle cx="8.8" cy="7.6" r="2.6" fill="#3aaa4a"/><path d="M7.6 7.6L8.5 8.5L10 6.9" fill="none" stroke="#fff" stroke-width="0.7"/></svg>
<svg style="left:613.5px;top:116px;" width="10" height="10" viewBox="0 0 10 10"><circle cx="5" cy="5" r="3.6" fill="#f6b8cc"/><circle cx="5" cy="5" r="2" fill="#e0508a"/><circle cx="5" cy="5" r="0.9" fill="#9a4ad0"/></svg>
<svg style="left:638.5px;top:115px;" width="10" height="11" viewBox="0 0 10 11"><path d="M1.5 7.5L2.2 5L6.8 0.6L8.4 2.2L3.8 6.6Z" fill="#c02a5a"/><path d="M0.5 9.5H7.5" stroke="#e8607a" stroke-width="1.2"/></svg>
<svg style="left:649.3px;top:119.5px;" width="6" height="4" viewBox="0 0 6 4"><path d="M0.6 0.6L3 3L5.4 0.6" fill="none" stroke="#666" stroke-width="1"/></svg>
<svg style="left:666.5px;top:115.5px;" width="10" height="10" viewBox="0 0 10 10"><circle cx="5" cy="5" r="4.2" fill="#f5c030" stroke="#e0a020" stroke-width="0.7"/><circle cx="3.6" cy="4.2" r="0.5" fill="#8a5a10"/><circle cx="6.4" cy="4.2" r="0.5" fill="#8a5a10"/><path d="M3.2 6Q5 7.6 6.8 6" fill="none" stroke="#8a5a10" stroke-width="0.6"/></svg>
<svg style="left:691.5px;top:115px;" width="11" height="11" viewBox="0 0 11 11"><rect x="0.5" y="1" width="8.5" height="8" rx="1" fill="#f6c040" stroke="#e09a20" stroke-width="0.6"/><rect x="0.5" y="1" width="8.5" height="2" fill="#e8902a"/><circle cx="8" cy="8.2" r="2.4" fill="#3aaa4a"/></svg>
<svg style="left:716.5px;top:115px;" width="11" height="11" viewBox="0 0 11 11"><path d="M2 7.5L5.5 2.5A1.8 1.8 0 0 1 8.2 4.6L4.8 9.5A1.8 1.8 0 0 1 2 7.5Z" fill="none" stroke="#7a8fc0" stroke-width="0.9"/><circle cx="8" cy="8" r="2.4" fill="#3aaa4a"/></svg>
<svg style="left:749.5px;top:115.5px;" width="10" height="10" viewBox="0 0 10 10"><path d="M1 1.5H9V6.5H5L2.8 8.5V6.5H1Z" fill="#f6b088" stroke="#e8803a" stroke-width="0.8"/><path d="M2.8 3.5H7.2M2.8 5H6" stroke="#e8803a" stroke-width="0.6"/></svg>
<svg style="left:774.5px;top:115.5px;" width="10" height="10" viewBox="0 0 10 10"><circle cx="5" cy="5" r="4.3" fill="#3a8ae8"/><circle cx="5" cy="5" r="4.5" fill="none" stroke="#a070e0" stroke-width="0.6"/><path d="M2.5 5.5L4 4L5.5 5.5L7.5 3.5" fill="none" stroke="#fff" stroke-width="0.9"/></svg>
<svg style="left:995.8px;top:116.2px;" width="18" height="10" viewBox="0 0 18 10"><rect x="0.5" y="0.5" width="17" height="9" rx="4.5" fill="#5b6270"/><circle cx="5" cy="5" r="3.7" fill="#fff"/><path d="M3.3 6.7L6.7 3.3" stroke="#5b6270" stroke-width="1"/></svg>
<div class="a" style="left:379px;top:133px;width:91px;height:299px;background:#efefef;"></div>
<div class="a" style="left:447px;top:133px;width:0.6px;height:299px;background:#e2e2e2;"></div>
<div class="a" style="left:456.8px;top:133px;width:12.6px;height:299px;background:#ededed;"></div>
<div class="a" style="left:469.4px;top:133px;width:554.6px;height:299px;background:#f6f6f6;"></div>
<div class="a" style="left:456.8px;top:133px;width:12.6px;height:3.6px;background:#fafafa;"></div>
<div class="a" style="left:1019px;top:255px;width:5px;height:177px;background:#e2e2e2;border-radius:2.5px 0 0 0"></div>
<div class="a" style="left:456.8px;top:146.3px;width:12.6px;height:10.199999999999989px;background:#fafafa;"></div>
<div class="t" style="left:461.8px;top:147.48px;font-size:6.5px;line-height:9px;color:#7a8794;transform:scaleX(0.9931);">6</div>
<div class="a" style="left:456.8px;top:185.4px;width:12.6px;height:25.099999999999994px;background:#fafafa;"></div>
<div class="t" style="left:461.8px;top:186.48px;font-size:6.5px;line-height:9px;color:#7a8794;transform:scaleX(0.9931);">7</div>
<div class="a" style="left:456.8px;top:257.7px;width:12.6px;height:23.900000000000034px;background:#fafafa;"></div>
<div class="t" style="left:461.8px;top:259.18px;font-size:6.5px;line-height:9px;color:#7a8794;transform:scaleX(0.9931);">8</div>
<div class="a" style="left:456.8px;top:290.8px;width:12.6px;height:37.80000000000001px;background:#fafafa;"></div>
<div class="t" style="left:461.8px;top:292.48px;font-size:6.5px;line-height:9px;color:#7a8794;transform:scaleX(0.9931);">9</div>
<div class="a" style="left:456.8px;top:353.8px;width:12.6px;height:9.399999999999977px;background:#fafafa;"></div>
<div class="t" style="left:460.3px;top:353.68px;font-size:6.5px;line-height:9px;color:#7a8794;transform:scaleX(0.9676);">10</div>
<div class="a" style="left:456.8px;top:372.7px;width:12.6px;height:50.10000000000002px;background:#fafafa;"></div>
<div class="t" style="left:460.3px;top:373.18px;font-size:6.5px;line-height:9px;color:#7a8794;transform:scaleX(1.0370);">11</div>
<svg style="left:384.4px;top:141.3px;" width="9" height="3" viewBox="0 0 9 3"><circle cx="1" cy="1.1" r="0.9" fill="#555"/><circle cx="4.2" cy="1.1" r="0.9" fill="#555"/><circle cx="7.4" cy="1.1" r="0.9" fill="#555"/></svg>
<div class="a" style="left:442.5px;top:133px;width:1.2px;height:2.7px;background:#3a7ad8;"></div>
<div class="a" style="left:442.5px;top:134.7px;width:2.2px;height:1px;background:#3a7ad8;"></div>
<div class="a" style="left:379px;top:133px;width:645px;height:299px;overflow:hidden">
<div class="a" style="left:95.30000000000001px;top:-7.00px;width:540.7px;font-size:8.4px;line-height:12px;color:#2e2e2e;font-style:italic;white-space:nowrap;overflow:visible">learners know how to block and give from their situation.</div>
</div>
<div class="a" style="left:379px;top:132px;width:645px;height:1px;background:#dedede;"></div>
<div class="a" style="left:474.4px;top:146.50px;width:125.60000000000002px;font-size:8.4px;line-height:12px;color:#2e2e2e;font-weight:bold;white-space:nowrap;overflow:visible">Question 3:</div>
<div class="a" style="left:538.75px;top:146.50px;width:361.25px;font-size:8.4px;line-height:12px;color:#2e2e2e;font-weight:bold;transform:scaleX(1.015);transform-origin:0 50%;white-space:nowrap;overflow:visible">What teaching strategies do you currently use to teaching these students?</div>
<div class="a" style="left:476px;top:185.00px;width:534px;font-size:8.4px;line-height:12px;color:#2e2e2e;font-style:italic;transform:scaleX(0.997);transform-origin:0 50%;white-space:nowrap;overflow:visible"><span style="color:#9a9a9a">…….</span>the use of peer groups where students can tap into their peers’ knowledge of the work to get a better understanding or catch up with work</div>
<div class="a" style="left:474.6px;top:198.60px;width:525.4px;font-size:8.4px;line-height:12px;color:#2e2e2e;font-style:italic;white-space:nowrap;overflow:visible">missed. In most cases, this works as I find students are caught up and understand the work by almost 70% better.</div>
<div class="a" style="left:474.8px;top:257.60px;width:85.19999999999999px;font-size:8.4px;line-height:12px;color:#2e2e2e;font-weight:bold;white-space:nowrap;overflow:visible">Question 4</div>
<div class="a" style="left:540px;top:257.60px;width:475px;font-size:8.4px;line-height:12px;color:#2e2e2e;font-weight:bold;text-align:justify;text-align-last:justify;white-space:nowrap;overflow:visible">Are these teaching strategies you use, effective, or what challenges do you perhaps experience in teaching these</div>
<div class="a" style="left:474.8px;top:271.00px;width:125.19999999999999px;font-size:8.4px;line-height:12px;color:#2e2e2e;font-weight:bold;white-space:nowrap;overflow:visible">students?</div>
<div class="a" style="left:474.8px;top:290.80px;width:540.2px;font-size:8.4px;line-height:12px;color:#2e2e2e;font-style:italic;text-align:justify;text-align-last:justify;white-space:nowrap;overflow:visible">Every student has a different ability in the classroom, so pairing an academically strong student with others creates a tremendous amount of</div>
<div class="a" style="left:474.8px;top:304.20px;width:540.2px;font-size:8.4px;line-height:12px;color:#2e2e2e;font-style:italic;text-align:justify;text-align-last:justify;white-space:nowrap;overflow:visible">support as there are times I am unable to give every student individual attention.&nbsp; There is just not enough time in the trimester to finish the</div>
<div class="a" style="left:474.8px;top:317.60px;width:125.19999999999999px;font-size:8.4px;line-height:12px;color:#2e2e2e;font-style:italic;white-space:nowrap;overflow:visible">syllabus.</div>
<div class="a" style="left:474.8px;top:352.00px;width:125.19999999999999px;font-size:8.4px;line-height:12px;color:#2e2e2e;font-weight:bold;white-space:nowrap;overflow:visible">Question 5:</div>
<div class="a" style="left:539px;top:352.00px;width:461px;font-size:8.4px;line-height:12px;color:#2e2e2e;font-weight:bold;transform:scaleX(1.008);transform-origin:0 50%;white-space:nowrap;overflow:visible">What do you think, is the most appropriate or effective way or ways of teaching such students?</div>
<div class="a" style="left:474.6px;top:372.40px;width:540.4px;font-size:8.4px;line-height:12px;color:#2e2e2e;font-style:italic;text-align:justify;text-align-last:justify;white-space:nowrap;overflow:visible">I keep my students active because I know they are experiencing problems.&nbsp; So I would go to them and physically aid them by demonstrating</div>
<div class="a" style="left:474.6px;top:385.80px;width:540.4px;font-size:8.4px;line-height:12px;color:#2e2e2e;font-style:italic;text-align:justify;text-align-last:justify;white-space:nowrap;overflow:visible">then ask ‘did you understand?’ in order to get feedback from the students. I <span style="background:#1b76cf;color:#dfe9f5;">try to explain to him again because I want him/her to be competent. I</span></div>
<div class="a" style="left:474.6px;top:399.20px;width:540.4px;font-size:8.4px;line-height:12px;color:#2e2e2e;font-style:italic;text-align:justify;text-align-last:justify;white-space:nowrap;overflow:visible"><span style="background:#1b76cf;color:#dfe9f5;">tell them that there is no other option but to pass. I want them to have a sense of belonging, I want them to feel that they belong in this class.&nbsp; You</span></div>
<div class="a" style="left:474.6px;top:412.60px;width:225.39999999999998px;font-size:8.4px;line-height:12px;color:#2e2e2e;font-style:italic;white-space:nowrap;overflow:visible"><span style="background:#1b76cf;color:#dfe9f5;">belong in this class.</span></div>
<svg style="left:439.8px;top:185.3px;" width="8" height="23.399999999999977" viewBox="0 0 8 23.399999999999977"><path d="M3 1V22.399999999999977" stroke="#4cbc62" stroke-width="1.4" /><path d="M3 1H4.6M3 22.399999999999977H4.6" stroke="#4cbc62" stroke-width="1.4"/><path d="M3 9.699999999999983L4.6 12.299999999999983L3 14.899999999999983L1.4 12.299999999999983Z" fill="#efefef" stroke="#4cbc62" stroke-width="0.9"/></svg>
<div class="t" style="left:380.7px;top:193.51px;font-size:7px;line-height:10px;color:#58bd6c;transform:scaleX(0.8695);">Encouraging peer tea</div>
<svg style="left:439.8px;top:290.8px;" width="8" height="23.69999999999999" viewBox="0 0 8 23.69999999999999"><path d="M3 1V22.69999999999999" stroke="#4cbc62" stroke-width="1.4" /><path d="M3 1H4.6M3 22.69999999999999H4.6" stroke="#4cbc62" stroke-width="1.4"/><path d="M3 9.299999999999978L4.6 11.899999999999977L3 14.499999999999977L1.4 11.899999999999977Z" fill="#efefef" stroke="#4cbc62" stroke-width="0.9"/></svg>
<div class="t" style="left:380.5px;top:299.11px;font-size:7px;line-height:10px;color:#58bd6c;transform:scaleX(0.8959);">Encouraging peer t</div>
<div class="a" style="left:380.5px;top:315px;width:52.5px;height:5.3px;background:#d8f0d8;"></div>
<svg style="left:434.4px;top:304.8px;" width="8" height="22.899999999999977" viewBox="0 0 8 22.899999999999977"><path d="M3 1V21.899999999999977" stroke="#9ad8a0" stroke-width="0.9" stroke-dasharray="1.2 0.8"/><path d="M3 1H4.6M3 21.899999999999977H4.6" stroke="#9ad8a0" stroke-width="0.9"/><path d="M3 8.9L4.6 11.5L3 14.1L1.4 11.5Z" fill="#efefef" stroke="#9ad8a0" stroke-width="0.9"/></svg>
<div class="t" style="left:380.5px;top:312.21px;font-size:7px;line-height:10px;color:#58bd6c;transform:scaleX(0.9135);text-decoration:underline;">Lack of sufficient ti</div>
<svg style="left:439.8px;top:371.7px;" width="8" height="24.30000000000001" viewBox="0 0 8 24.30000000000001"><path d="M3 1V23.30000000000001" stroke="#eecb55" stroke-width="1.2" stroke-dasharray="1.2 0.8"/><path d="M3 1H4.6M3 23.30000000000001H4.6" stroke="#eecb55" stroke-width="1.2"/><path d="M3 9.599999999999989L4.6 12.199999999999989L3 14.799999999999988L1.4 12.199999999999989Z" fill="#efefef" stroke="#eecb55" stroke-width="0.9"/></svg>
<div class="t" style="left:380.3px;top:380.61px;font-size:7px;line-height:10px;color:#ebc850;transform:scaleX(0.8991);">Encouraging stude</div>
<svg style="left:434.1px;top:385.5px;" width="8" height="38.10000000000002" viewBox="0 0 8 38.10000000000002"><path d="M3 1V37.10000000000002" stroke="#eecb55" stroke-width="1.2" stroke-dasharray="1.2 0.8"/><path d="M3 1H4.6M3 37.10000000000002H4.6" stroke="#eecb55" stroke-width="1.2"/><path d="M3 16.4L4.6 19.0L3 21.6L1.4 19.0Z" fill="#efefef" stroke="#eecb55" stroke-width="0.9"/></svg>
<div class="t" style="left:380.3px;top:400.91px;font-size:7px;line-height:10px;color:#ebc850;transform:scaleX(0.8634);">Promoting a sense</div>
<div class="a" style="left:379px;top:432px;width:645px;height:1px;background:#dcdcdc;"></div>
<div class="a" style="left:379px;top:433px;width:645px;height:101px;background:#f7f7f7;"></div>
<svg style="left:389.5px;top:443px;" width="9" height="9" viewBox="0 0 9 9"><path d="M4.5 0.5V8.5" stroke="#e0506a" stroke-width="0.9"/><path d="M4.5 2.4L6.3 4.5L4.5 6.6L2.7 4.5Z" fill="none" stroke="#e0506a" stroke-width="0.9"/><path d="M1 2.5L0.3 4.5L1 6.5M8 2.5L8.7 4.5L8 6.5" fill="none" stroke="#f0b040" stroke-width="0.8"/></svg>
<div class="t" style="left:402.2px;top:442.81px;font-size:7px;line-height:10px;color:#1e1e1e;font-weight:bold;transform:scaleX(0.9627);">Retrieved Segments</div>
<svg style="left:966.6px;top:442.8px" width="8" height="8" viewBox="-4 -4 8 8"><rect x="-0.9" y="-4" width="1.8" height="2" fill="#2a2a2a" transform="rotate(0)"/><rect x="-0.9" y="-4" width="1.8" height="2" fill="#2a2a2a" transform="rotate(45)"/><rect x="-0.9" y="-4" width="1.8" height="2" fill="#2a2a2a" transform="rotate(90)"/><rect x="-0.9" y="-4" width="1.8" height="2" fill="#2a2a2a" transform="rotate(135)"/><rect x="-0.9" y="-4" width="1.8" height="2" fill="#2a2a2a" transform="rotate(180)"/><rect x="-0.9" y="-4" width="1.8" height="2" fill="#2a2a2a" transform="rotate(225)"/><rect x="-0.9" y="-4" width="1.8" height="2" fill="#2a2a2a" transform="rotate(270)"/><rect x="-0.9" y="-4" width="1.8" height="2" fill="#2a2a2a" transform="rotate(315)"/><circle r="2.7" fill="#2a2a2a"/><circle r="1.1" fill="#f8f8f8"/></svg>
<div class="a" style="left:984px;top:446.3px;width:7px;height:1.3px;background:#333;"></div>
<svg style="left:1000.5px;top:442.5px;" width="9" height="9" viewBox="0 0 9 9"><rect x="0.6" y="0.6" width="7.8" height="7.8" rx="1" fill="none" stroke="#444" stroke-width="1"/><rect x="0.6" y="0.6" width="7.8" height="1.6" fill="#444"/><path d="M3.2 6L5.8 3.4M3.8 3.4H5.8V5.4" fill="none" stroke="#444" stroke-width="0.8"/></svg>
<div class="t" style="left:667.3px;top:491.51px;font-size:7px;line-height:10px;color:#555;transform:scaleX(0.9151);">No results to display yet</div>
<div class="t" style="left:621.7px;top:504.14px;font-size:6px;line-height:8px;color:#a0a0a0;transform:scaleX(1.0286);">To list retrieved segments,</div>
<div class="a" style="left:695px;top:505.5px;width:329px;height:19.8px;background:#dcdcdc;"></div>
<svg style="left:701px;top:509.5px;" width="7" height="11" viewBox="0 0 7 11"><rect x="1.5" y="0.5" width="4" height="6.5" rx="2" fill="none" stroke="#333" stroke-width="1.1"/><path d="M0.6 4.8Q0.6 8.2 3.5 8.2T6.4 4.8M3.5 8.2V10.3" fill="none" stroke="#333" stroke-width="0.9"/></svg>
<svg style="left:1008px;top:511px;" width="8" height="8" viewBox="0 0 8 8"><path d="M0.5 0.5L7.5 7.5M7.5 0.5L0.5 7.5" stroke="#444" stroke-width="1.1"/></svg>
<div class="a" style="left:379px;top:533.5px;width:645px;height:1px;background:#e0e0e0;"></div>
<svg style="left:4.5px;top:541px;" width="8" height="9" viewBox="0 0 8 9"><path d="M0 1.5H8M0 4.5H8M0 7.5H8" stroke="#333" stroke-width="0.9"/><path d="M5.5 0V3M2.5 3V6M5 6V9" stroke="#333" stroke-width="1.4"/></svg>
<svg style="left:24px;top:540.5px;" width="10" height="10" viewBox="0 0 10 10"><circle cx="5" cy="4.8" r="4.5" fill="#2e3440"/><path d="M1.3 7.5L0.5 9.8L3 8.6Z" fill="#2e3440"/><path d="M2.8 5.2Q5 7.4 7.2 5.2" fill="none" stroke="#fff" stroke-width="0.8"/><circle cx="3.4" cy="3.6" r="0.6" fill="#fff"/><circle cx="6.6" cy="3.6" r="0.6" fill="#fff"/></svg>
<svg style="left:45px;top:540.5px;" width="10" height="10" viewBox="0 0 10 10"><circle cx="5" cy="5" r="5" fill="#2e3440"/><path d="M3.4 3.8Q3.4 2.2 5 2.2T6.6 3.8Q6.6 4.8 5 5.4V6.3" fill="none" stroke="#fff" stroke-width="1"/><circle cx="5" cy="7.8" r="0.6" fill="#fff"/></svg>
<svg style="left:90.3px;top:541.3px;" width="19" height="9" viewBox="0 0 19 9"><rect x="0" y="0" width="18.3" height="8.8" rx="4.4" fill="#3a78d8"/><circle cx="13.9" cy="4.4" r="4" fill="#f0b020"/><path d="M3.5 3H6.5M3.5 5.5H6.5" stroke="#cfe0ff" stroke-width="0.8"/></svg>
<svg style="left:70px;top:533px;" width="14" height="19" viewBox="0 0 14 19"><path d="M11 0.5Q8 6 2 18.5" fill="none" stroke="#dedede" stroke-width="0.9"/></svg>
<div class="a" style="left:154.5px;top:477px;width:229.5px;height:75px;background:#3f3f3f;box-shadow:0 0 3px rgba(0,0,0,0.35)"></div>
<svg style="left:158.9px;top:482.2px;" width="9" height="8" viewBox="0 0 9 8"><rect x="2.8" y="0.5" width="5.8" height="7" fill="#e8eef8"/><path d="M4 2.2H8M4 3.7H8M4 5.2H8" stroke="#2b579a" stroke-width="0.6"/><rect x="0" y="0" width="5.5" height="8" fill="#2b579a"/><text x="0.6" y="6" font-size="5" font-weight="bold" fill="#fff" font-family="Liberation Sans">W</text></svg>
<div class="t" style="left:171.5px;top:481.15px;font-size:7.5px;line-height:10px;color:#e6e6e6;transform:scaleX(0.8517);">Lecturer 3 - Word (Product Acti...</div>
<svg style="left:273.6px;top:482.2px;" width="9" height="8" viewBox="0 0 9 8"><rect x="2.8" y="0.5" width="5.8" height="7" fill="#e8eef8"/><path d="M4 2.2H8M4 3.7H8M4 5.2H8" stroke="#2b579a" stroke-width="0.6"/><rect x="0" y="0" width="5.5" height="8" fill="#2b579a"/><text x="0.6" y="6" font-size="5" font-weight="bold" fill="#fff" font-family="Liberation Sans">W</text></svg>
<div class="t" style="left:286.5px;top:481.15px;font-size:7.5px;line-height:10px;color:#e6e6e6;transform:scaleX(0.8221);">Research Questions - Word (Pr...</div>
<div class="a" style="left:158.9px;top:494.5px;width:105.2px;height:57.5px;background:#e4e4e4;"></div>
<div class="a" style="left:158.9px;top:494.5px;width:105.2px;height:3px;background:#2b579a;"></div>
<div class="a" style="left:158.9px;top:498.3px;width:105.2px;height:5px;background:#f4f4f4;"></div>
<svg style="left:158.9px;top:498.3px" width="106" height="5"><path d="M3 2.5H100" stroke="#b8b8b8" stroke-width="1.2" stroke-dasharray="2 1.2"/></svg>
<div class="a" style="left:165.6px;top:503.3px;width:90.6px;height:48.7px;background:#fbfbfb;"></div>
<div class="a" style="left:210px;top:503.3px;width:0.6px;height:48.7px;background:#e6e6e6;"></div>
<svg style="left:165.6px;top:503.3px" width="91" height="49"><path d="M5.400000000000006 5.699999999999989H13.400000000000006" stroke="#777" stroke-width="0.7" stroke-dasharray="1.6 0.6" opacity="0.75"/><path d="M5.400000000000006 7.699999999999989H35.400000000000006" stroke="#e07070" stroke-width="0.7" stroke-dasharray="1.6 0.6" opacity="0.75"/><path d="M5.400000000000006 11.699999999999989H35.400000000000006" stroke="#666" stroke-width="0.7" stroke-dasharray="1.6 0.6" opacity="0.75"/><path d="M5.400000000000006 13.699999999999989H33.400000000000006" stroke="#888" stroke-width="0.7" stroke-dasharray="1.6 0.6" opacity="0.75"/><path d="M5.400000000000006 15.699999999999989H35.400000000000006" stroke="#666" stroke-width="0.7" stroke-dasharray="1.6 0.6" opacity="0.75"/><path d="M5.400000000000006 17.69999999999999H31.400000000000006" stroke="#888" stroke-width="0.7" stroke-dasharray="1.6 0.6" opacity="0.75"/><path d="M5.400000000000006 20.69999999999999H35.400000000000006" stroke="#80b0e0" stroke-width="0.7" stroke-dasharray="1.6 0.6" opacity="0.75"/><path d="M5.400000000000006 22.69999999999999H27.400000000000006" stroke="#80b0e0" stroke-width="0.7" stroke-dasharray="1.6 0.6" opacity="0.75"/><path d="M5.400000000000006 27.69999999999999H35.400000000000006" stroke="#777" stroke-width="0.7" stroke-dasharray="1.6 0.6" opacity="0.75"/><path d="M5.400000000000006 29.69999999999999H33.400000000000006" stroke="#888" stroke-width="0.7" stroke-dasharray="1.6 0.6" opacity="0.75"/><path d="M5.400000000000006 31.69999999999999H25.400000000000006" stroke="#666" stroke-width="0.7" stroke-dasharray="1.6 0.6" opacity="0.75"/><path d="M5.400000000000006 36.69999999999999H35.400000000000006" stroke="#888" stroke-width="0.7" stroke-dasharray="1.6 0.6" opacity="0.75"/><path d="M5.400000000000006 41.69999999999999H35.400000000000006" stroke="#666" stroke-width="0.7" stroke-dasharray="1.6 0.6" opacity="0.75"/><path d="M52.400000000000006 6.699999999999989H86.4" stroke="#80d0a0" stroke-width="0.7" stroke-dasharray="1.6 0.6" opacity="0.75"/><path d="M52.400000000000006 11.699999999999989H82.4" stroke="#666" stroke-width="0.7" stroke-dasharray="1.6 0.6" opacity="0.75"/><path d="M52.400000000000006 13.699999999999989H80.4" stroke="#777" stroke-width="0.7" stroke-dasharray="1.6 0.6" opacity="0.75"/><path d="M52.400000000000006 15.699999999999989H82.4" stroke="#666" stroke-width="0.7" stroke-dasharray="1.6 0.6" opacity="0.75"/><path d="M52.400000000000006 19.69999999999999H86.4" stroke="#f0d890" stroke-width="0.7" stroke-dasharray="1.6 0.6" opacity="0.75"/><path d="M52.400000000000006 21.69999999999999H74.4" stroke="#f0d890" stroke-width="0.7" stroke-dasharray="1.6 0.6" opacity="0.75"/><path d="M52.400000000000006 26.69999999999999H82.4" stroke="#777" stroke-width="0.7" stroke-dasharray="1.6 0.6" opacity="0.75"/><path d="M52.400000000000006 28.69999999999999H82.4" stroke="#666" stroke-width="0.7" stroke-dasharray="1.6 0.6" opacity="0.75"/><path d="M52.400000000000006 30.69999999999999H76.4" stroke="#888" stroke-width="0.7" stroke-dasharray="1.6 0.6" opacity="0.75"/><path d="M52.400000000000006 33.69999999999999H82.4" stroke="#777" stroke-width="0.7" stroke-dasharray="1.6 0.6" opacity="0.75"/></svg>
<div class="a" style="left:274.2px;top:494.5px;width:104.9px;height:57.5px;background:#e2e2e2;"></div>
<div class="a" style="left:274.2px;top:494.5px;width:104.9px;height:3px;background:#2b579a;"></div>
<div class="a" style="left:274.2px;top:498.5px;width:104.9px;height:5px;background:#f4f4f4;"></div>
<svg style="left:274.2px;top:498.5px" width="105" height="5"><path d="M3 2.5H100" stroke="#b8b8b8" stroke-width="1.2" stroke-dasharray="2 1.2"/></svg>
<div class="a" style="left:303.9px;top:503.5px;width:45.1px;height:48.5px;background:#fbfbfb;"></div>
<svg style="left:303.9px;top:503.5px;" width="46" height="49" viewBox="0 0 46 49"><path d="M4 6.3H13" stroke="#888" stroke-width="0.6"/><path d="M7 9.9H34" stroke="#999" stroke-width="0.6" stroke-dasharray="1.5 0.5"/><path d="M7 14.3H38" stroke="#aaa" stroke-width="0.6" stroke-dasharray="1.5 0.5"/></svg>
</body></html>
